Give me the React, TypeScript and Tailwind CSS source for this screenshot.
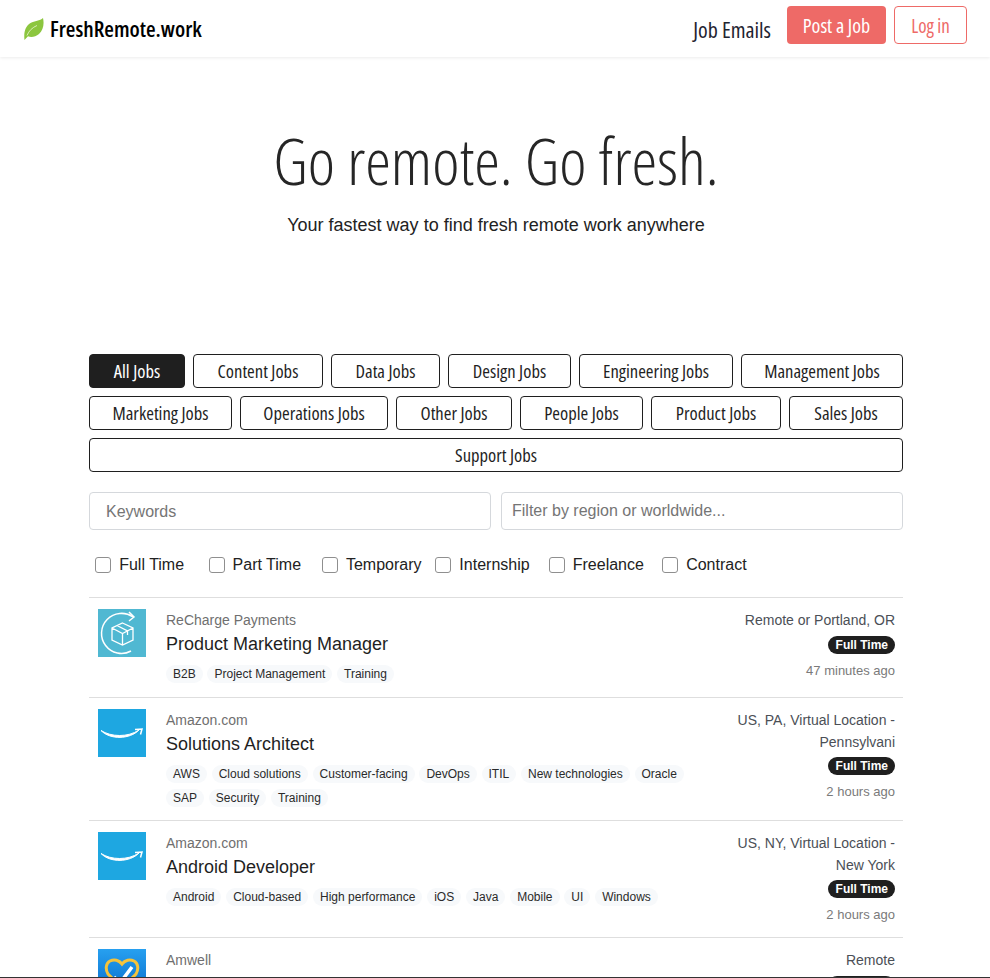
const narrow = "font-['Open_Sans',sans-serif] font-stretch-condensed"

const categories = [
  { name: 'All Jobs', width: 'w-[96px]' },
  { name: 'Content Jobs', width: 'w-[130px]' },
  { name: 'Data Jobs', width: 'w-[109px]' },
  { name: 'Design Jobs', width: 'w-[123px]' },
  { name: 'Engineering Jobs', width: 'w-[154px]' },
  { name: 'Management Jobs', width: 'w-[162px]' },
  { name: 'Marketing Jobs', width: 'w-[143px]' },
  { name: 'Operations Jobs', width: 'w-[148px]' },
  { name: 'Other Jobs', width: 'w-[116px]' },
  { name: 'People Jobs', width: 'w-[123px]' },
  { name: 'Product Jobs', width: 'w-[130px]' },
  { name: 'Sales Jobs', width: 'w-[114px]' },
  { name: 'Support Jobs', width: 'w-full' },
]

const jobTypes = ['Full Time', 'Part Time', 'Temporary', 'Internship', 'Freelance', 'Contract']

function Leaf() {
  return (
    <svg width="20" height="22" viewBox="0 0 20 22">
      <path d="M.5 22C-.5 14 1.500 8 6.500 5c4-2.300 9.500-2 12.500-5 1.500 6.500 0 12.500-4 16-3.500 3-8 3.500-11 2.300L.5 22z" fill="#8cc63f" />
      <path d="M3 17.500C5 12.500 8.500 9.500 13 7.500" fill="none" stroke="#d8ecb8" strokeWidth="1" />
    </svg>
  )
}

function RechargeLogo() {
  return (
    <svg width="48" height="48" viewBox="0 0 48 48" className="block bg-[#50b8d2]">
      <path d="M35 8A20 20 0 1 0 33 42" fill="none" stroke="#fff" strokeWidth="1.500" />
      <path d="M31 3l5 5-5 4" fill="none" stroke="#fff" strokeWidth="1.500" />
      <path d="M24.500 14L35 19v12l-10.500 5L14 31V19zM14 19l10.500 5.500L35 19M24.500 24.500V36M19 16.500l10.500 5.500v4" fill="none" stroke="#fff" strokeWidth="1.300" />
    </svg>
  )
}

function AmazonLogo() {
  return (
    <svg width="48" height="48" viewBox="0 0 48 48" className="block bg-[#1ea7e1]">
      <path d="M3 21.500c10 6.500 27 7 38-.5-9 9.500-29 10-38 .5z" fill="#fff" stroke="#fff" strokeWidth="1" />
      <path d="M37 20.500l7-.5-1.500 5.500" fill="none" stroke="#fff" strokeWidth="1.500" />
    </svg>
  )
}

function AmwellLogo() {
  return (
    <svg width="48" height="48" viewBox="0 0 48 48" className="block">
      <defs>
        <linearGradient id="amwell" x1="0" y1="0" x2="0" y2="1">
          <stop offset="0" stopColor="#27a0f0" />
          <stop offset="1" stopColor="#0668c8" />
        </linearGradient>
      </defs>
      <rect width="48" height="48" fill="url(#amwell)" />
      <path d="M24 15c-3-4-8-5-12-3-4 2-5 8-2 13l14 14 14-14c3-5 2-11-2-13-4-2-9-1-12 3z" fill="none" stroke="#f5c33b" strokeWidth="3" />
      <path d="M16 28l6 6 12-16" fill="none" stroke="#fff" strokeWidth="3.500" />
    </svg>
  )
}

type Job = {
  logo: React.ReactNode
  company: string
  title: string
  tags: string[]
  location: string
  age: string
}

const jobs: Job[] = [
  {
    logo: <RechargeLogo />,
    company: 'ReCharge Payments',
    title: 'Product Marketing Manager',
    tags: ['B2B', 'Project Management', 'Training'],
    location: 'Remote or Portland, OR',
    age: '47 minutes ago',
  },
  {
    logo: <AmazonLogo />,
    company: 'Amazon.com',
    title: 'Solutions Architect',
    tags: ['AWS', 'Cloud solutions', 'Customer-facing', 'DevOps', 'ITIL', 'New technologies', 'Oracle', 'SAP', 'Security', 'Training'],
    location: 'US, PA, Virtual Location - Pennsylvani',
    age: '2 hours ago',
  },
  {
    logo: <AmazonLogo />,
    company: 'Amazon.com',
    title: 'Android Developer',
    tags: ['Android', 'Cloud-based', 'High performance', 'iOS', 'Java', 'Mobile', 'UI', 'Windows'],
    location: 'US, NY, Virtual Location - New York',
    age: '2 hours ago',
  },
  {
    logo: <AmwellLogo />,
    company: 'Amwell',
    title: 'Product Manager',
    tags: ['Healthcare'],
    location: 'Remote',
    age: '2 hours ago',
  },
]

function JobRow({ job }: { job: Job }) {
  return (
    <div className="flex min-h-[100px] border-t border-[#dedede] pt-[11px] pb-[7px] pl-[9px] pr-2">
      <div className="w-[48px] shrink-0">{job.logo}</div>
      <div className="ml-5 mt-px flex-1 min-w-0">
        <div className="text-sm leading-[21px] text-[#6f6f6f]">{job.company}</div>
        <div className="text-lg leading-[27px] text-[#1f1f1f]">{job.title}</div>
        <div className="mt-[7px] flex flex-wrap max-w-[530px]">
          {job.tags.map(tag => (
            <span key={tag} className="mr-[4.800px] mb-[6px] h-[18px] rounded-full bg-[#f7f9fb] px-[7px] text-xs leading-[18px] text-[#2a2a2a]">
              {tag}
            </span>
          ))}
        </div>
      </div>
      <div className="mt-px w-[170px] shrink-0 pb-[5px] text-right">
        <div className="text-sm leading-[21.500px] text-[#4b4f56]">{job.location}</div>
        <div className="mt-[4px] flex justify-end">
          <span className="h-[18px] rounded-full bg-[#1f1f1f] pl-[8px] pr-[7px] text-xs font-bold leading-[18px] text-white">Full Time</span>
        </div>
        <div className="mt-[6px] text-[13px] leading-[21px] text-[#7a7a7a]">{job.age}</div>
      </div>
    </div>
  )
}

export default function App() {
  return (
    <div className="relative h-[978px] overflow-hidden bg-white font-['Liberation_Sans',sans-serif] text-[#1f1f1f]">
      <header className="flex h-[57px] items-start justify-between pl-6 pr-[23px] shadow-[0_1px_3px_rgba(0,0,0,0.08)]">
        <div className="mt-[18px] flex items-center gap-[6px]">
          <Leaf />
          <span className={`${narrow} -mt-[2px] text-[22px] font-semibold leading-[24px] text-black`}>FreshRemote.work</span>
        </div>
        <nav className={`${narrow} flex items-start pt-[6px] text-[19px] font-medium`}>
          <a className="mr-4 mt-[9px] text-[22px] leading-7 text-[#1f2430]">Job Emails</a>
          <a className="mr-2 flex h-[38px] w-[99px] items-center justify-center rounded bg-[#ee6a67] pt-[2px] text-[20px] text-white">Post a Job</a>
          <a className="flex h-[38px] w-[73px] items-center justify-center rounded border border-[#ee6a67] pt-[2px] text-[#ee6a67]">Log in</a>
        </nav>
      </header>

      <section className="pl-[2px] pt-[63px] text-center">
        <h1 className={`${narrow} text-[65px] leading-[80px] font-light text-[#262626]`}>Go remote. Go fresh.</h1>
        <p className="mt-[12px] text-lg leading-[27px] text-[#222]">Your fastest way to find fresh remote work anywhere</p>
      </section>

      <main className="mx-[89px] mt-[115px] w-[814px]">
        <div className="flex flex-wrap gap-2">
          {categories.map((c, i) => (
            <button
              key={c.name}
              type="button"
              className={`${narrow} ${c.width} h-[34px] rounded border border-[#1f1f1f] text-[18.600px] font-medium ${i === 0 ? 'bg-[#1f1f1f] text-white' : 'bg-white text-[#1f1f1f]'}`}
            >
              {c.name}
            </button>
          ))}
        </div>

        <div className="mt-[20px] flex gap-[10px]">
          <input placeholder="Keywords" className="h-[38px] w-[402px] rounded border border-[#d5d8dc] px-4 pt-[2px] text-base placeholder:text-[#757575]" />
          <input placeholder="Filter by region or worldwide..." className="h-[38px] w-[402px] rounded border border-[#d5d8dc] px-[10px] text-base placeholder:text-[#757575]" />
        </div>

        <div className="mt-[23px] flex pl-[6.200px]">
          {jobTypes.map(t => (
            <label key={t} className="flex w-[113.400px] items-center text-base leading-6 text-[#222]">
              <span className="mr-2 h-4 w-4 rounded-[3px] border border-[#8f8f8f] bg-white" />
              {t}
            </label>
          ))}
        </div>

        <div className="mt-[20px]">
          {jobs.map(job => (
            <JobRow key={job.title} job={job} />
          ))}
        </div>
      </main>

      <div className="absolute inset-x-0 bottom-0 h-px bg-[#333]" />
    </div>
  )
}
